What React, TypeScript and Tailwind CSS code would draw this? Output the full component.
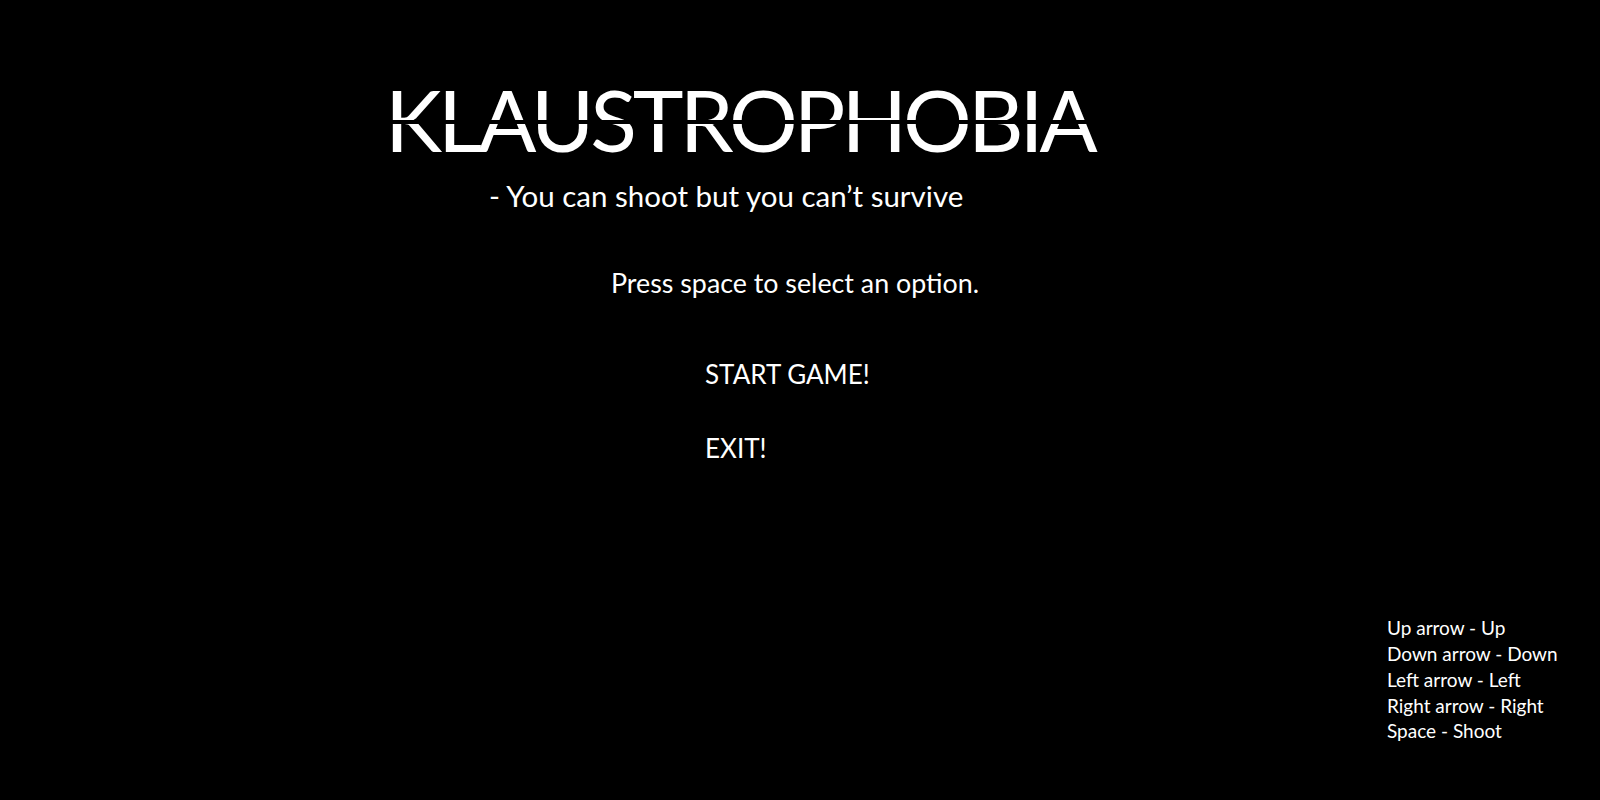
export default function App() {
  return (
    <div className="h-[800px] w-[1600px] bg-black text-white font-['Lato','Open_Sans',sans-serif] flex flex-col overflow-hidden">
      <div className="ml-[385px] mt-[76px] relative self-start">
        <h1 className="text-[86px] leading-none tracking-[-4px] font-normal">KLAUSTROPHOBIA</h1>
        <div className="absolute left-0 right-0 top-[44px] h-[4px] bg-black" />
      </div>
      <p className="ml-[489px] mt-[19px] text-[29.5px] leading-none">- You can shoot but you can’t survive</p>
      <p className="ml-[611px] mt-[59px] text-[26.8px] leading-none">Press space to select an option.</p>
      <nav className="ml-[705px] mt-[65px] flex flex-col gap-[48px] text-[26px] leading-none">
        <span>START GAME!</span>
        <span>EXIT!</span>
      </nav>
      <div className="ml-[1387px] mt-auto mb-[56px] flex flex-col text-[19px] leading-[25.7px]">
        <span>Up arrow - Up</span>
        <span>Down arrow - Down</span>
        <span>Left arrow - Left</span>
        <span>Right arrow - Right</span>
        <span>Space - Shoot</span>
      </div>
    </div>
  );
}
